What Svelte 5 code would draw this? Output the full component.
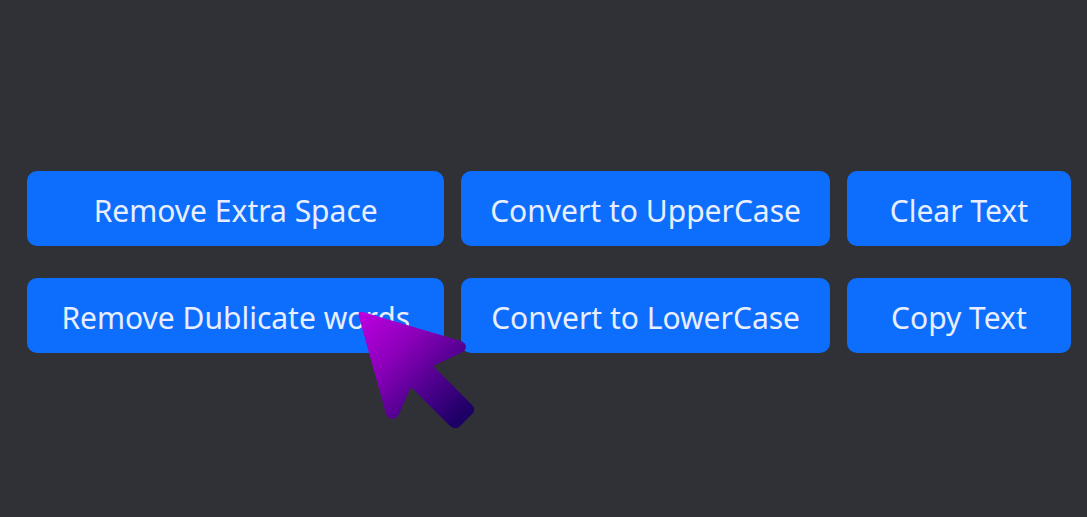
<script>
  const actions = [
    'Remove Extra Space', 'Convert to UpperCase', 'Clear Text',
    'Remove Dublicate words', 'Convert to LowerCase', 'Copy Text'
  ];
</script>

<main>
  <div class="actions">
    {#each actions as label}
      <button type="button">{label}</button>
    {/each}
  </div>
  <svg class="pointer" viewBox="0 0 120 120" aria-hidden="true">
    <defs>
      <linearGradient id="ink" gradientUnits="userSpaceOnUse" x1="12" y1="14" x2="112" y2="114">
        <stop offset="0" stop-color="#b800de" />
        <stop offset="0.35" stop-color="#8c00ba" />
        <stop offset="0.7" stop-color="#4c008c" />
        <stop offset="1" stop-color="#1c0064" />
      </linearGradient>
    </defs>
    <path fill="url(#ink)" d="M11 11Q5 10 7 16L34 113Q36 118 41 118Q45 117 47 113L58 88Q59 86 61 88L98 125Q103 129 107 126L121 112Q124 108 120 104L83 67Q81 65 83 64L109 52Q114 49 114 46Q114 42 109 40Z" />
  </svg>
</main>

<style>
  :global(body) {
    background: #303136;
  }
  main {
    position: relative;
    box-sizing: border-box;
    min-height: 100vh;
    padding: 171px 16px 32px 27px;
  }
  .actions {
    display: grid;
    grid-template-columns: 417fr 368fr 224fr;
    gap: 32px 17px;
  }
  button {
    height: 75px;
    padding: 4px 8px 0;
    border: 0;
    border-radius: 10px;
    background: #0d6efd;
    color: #e8eeff;
    font: 30px/40px "Noto Sans", sans-serif;
    white-space: nowrap;
  }
  .pointer {
    position: absolute;
    left: 352px;
    top: 301px;
    width: 120px;
    height: 120px;
    overflow: visible;
    pointer-events: none;
  }
</style>
